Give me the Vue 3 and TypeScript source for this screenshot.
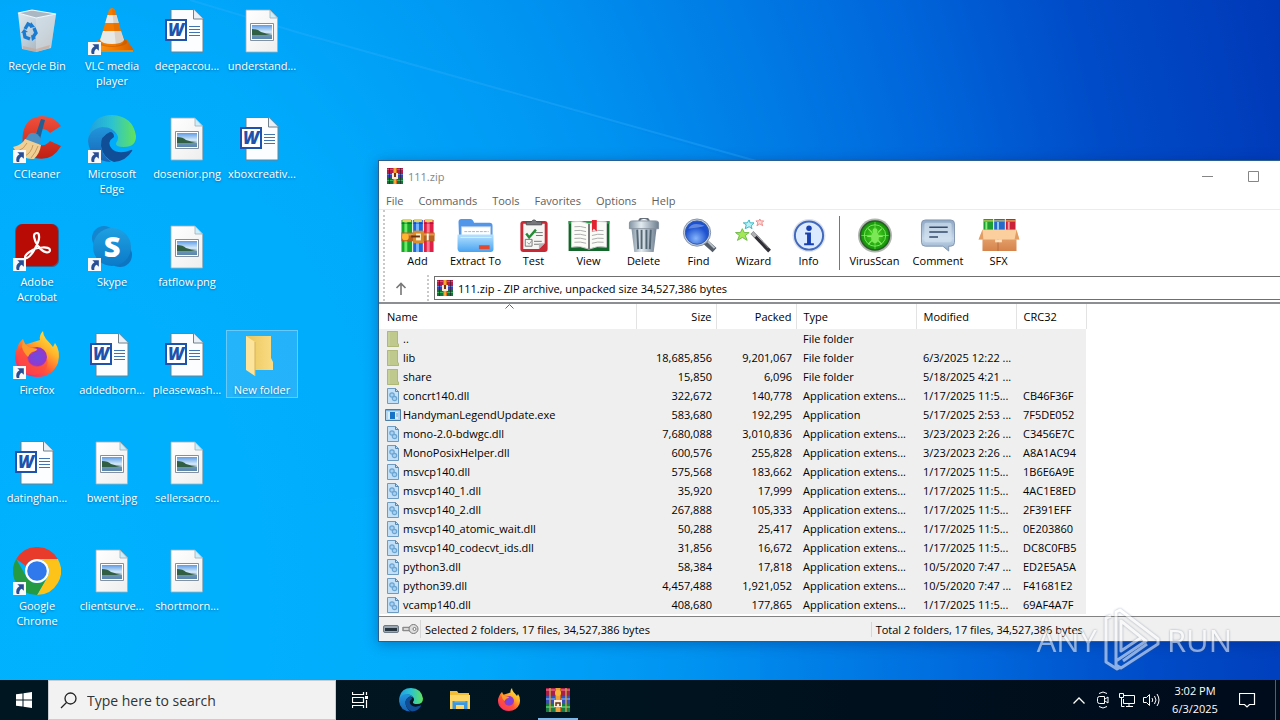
<script setup lang="ts">
interface Shortcut {
  lines: string[]
  icon: string
  link?: boolean
  selected?: boolean
}

const columns: (Shortcut | null)[][] = [
  [
    { lines: ['Recycle Bin'], icon: 'bin' },
    { lines: ['CCleaner'], icon: 'ccleaner', link: true },
    { lines: ['Adobe', 'Acrobat'], icon: 'acrobat', link: true },
    { lines: ['Firefox'], icon: 'firefox', link: true },
    { lines: ['datinghan...'], icon: 'word' },
    { lines: ['Google', 'Chrome'], icon: 'chrome', link: true },
  ],
  [
    { lines: ['VLC media', 'player'], icon: 'vlc', link: true },
    { lines: ['Microsoft', 'Edge'], icon: 'edge', link: true },
    { lines: ['Skype'], icon: 'skype', link: true },
    { lines: ['addedborn...'], icon: 'word' },
    { lines: ['bwent.jpg'], icon: 'picture' },
    { lines: ['clientsurve...'], icon: 'picture' },
  ],
  [
    { lines: ['deepaccou...'], icon: 'word' },
    { lines: ['dosenior.png'], icon: 'picture' },
    { lines: ['fatflow.png'], icon: 'picture' },
    { lines: ['pleasewash...'], icon: 'word' },
    { lines: ['sellersacro...'], icon: 'picture' },
    { lines: ['shortmorn...'], icon: 'picture' },
  ],
  [
    { lines: ['understand...'], icon: 'picture' },
    { lines: ['xboxcreativ...'], icon: 'word' },
    null,
    { lines: ['New folder'], icon: 'folder', selected: true },
  ],
]

const menus = ['File', 'Commands', 'Tools', 'Favorites', 'Options', 'Help']

const mainTools = [
  { label: 'Add', icon: 't-add', size: 'medium' },
  { label: 'Extract To', icon: 't-extract', size: 'wide' },
  { label: 'Test', icon: 't-test', size: 'medium' },
  { label: 'View', icon: 't-view', size: 'medium' },
  { label: 'Delete', icon: 't-delete', size: 'medium' },
  { label: 'Find', icon: 't-find', size: 'medium' },
  { label: 'Wizard', icon: 't-wizard', size: 'medium' },
  { label: 'Info', icon: 't-info', size: 'medium' },
]
const extraTools = [
  { label: 'VirusScan', icon: 't-virus', size: 'wide' },
  { label: 'Comment', icon: 't-comment', size: 'wider' },
  { label: 'SFX', icon: 't-sfx', size: 'medium' },
]

const headers = [
  { label: 'Name', cls: 'name' },
  { label: 'Size', cls: 'num' },
  { label: 'Packed', cls: 'num' },
  { label: 'Type', cls: '' },
  { label: 'Modified', cls: '' },
  { label: 'CRC32', cls: '' },
]

type Row = [string, string, string, string, string, string, string]
const ext = 'Application extens...'
const rows: Row[] = [
  ['f-folder', '..', '', '', 'File folder', '', ''],
  ['f-folder', 'lib', '18,685,856', '9,201,067', 'File folder', '6/3/2025 12:22 ...', ''],
  ['f-folder', 'share', '15,850', '6,096', 'File folder', '5/18/2025 4:21 ...', ''],
  ['f-dll', 'concrt140.dll', '322,672', '140,778', ext, '1/17/2025 11:5...', 'CB46F36F'],
  ['f-exe', 'HandymanLegendUpdate.exe', '583,680', '192,295', 'Application', '5/17/2025 2:53 ...', '7F5DE052'],
  ['f-dll', 'mono-2.0-bdwgc.dll', '7,680,088', '3,010,836', ext, '3/23/2023 2:26 ...', 'C3456E7C'],
  ['f-dll', 'MonoPosixHelper.dll', '600,576', '255,828', ext, '3/23/2023 2:26 ...', 'A8A1AC94'],
  ['f-dll', 'msvcp140.dll', '575,568', '183,662', ext, '1/17/2025 11:5...', '1B6E6A9E'],
  ['f-dll', 'msvcp140_1.dll', '35,920', '17,999', ext, '1/17/2025 11:5...', '4AC1E8ED'],
  ['f-dll', 'msvcp140_2.dll', '267,888', '105,333', ext, '1/17/2025 11:5...', '2F391EFF'],
  ['f-dll', 'msvcp140_atomic_wait.dll', '50,288', '25,417', ext, '1/17/2025 11:5...', '0E203860'],
  ['f-dll', 'msvcp140_codecvt_ids.dll', '31,856', '16,672', ext, '1/17/2025 11:5...', 'DC8C0FB5'],
  ['f-dll', 'python3.dll', '58,384', '17,818', ext, '10/5/2020 7:47 ...', 'ED2E5A5A'],
  ['f-dll', 'python39.dll', '4,457,488', '1,921,052', ext, '10/5/2020 7:47 ...', 'F41681E2'],
  ['f-dll', 'vcamp140.dll', '408,680', '177,865', ext, '1/17/2025 11:5...', '69AF4A7F'],
]

const pinned = [
  { label: 'Microsoft Edge', icon: 'edge', cls: '' },
  { label: 'File Explorer', icon: 'explorer', cls: '' },
  { label: 'Firefox', icon: 'firefox', cls: '' },
  { label: 'WinRAR', icon: 'rar-tall', cls: 'active' },
]
</script>

<template>
  <div class="screen">
    <svg class="sprite" aria-hidden="true">
      <defs>
        <linearGradient id="g-bin" x1="0" y1="0" x2="1" y2="1"><stop offset="0" stop-color="#dfe7ec" /><stop offset=".5" stop-color="#b9cbd8" /><stop offset="1" stop-color="#a79f9b" /></linearGradient>
        <linearGradient id="g-red" x1="0" y1="0" x2="0" y2="1"><stop offset="0" stop-color="#f0503c" /><stop offset="1" stop-color="#c01f12" /></linearGradient>
        <linearGradient id="g-orange" x1="0" x2="1"><stop offset="0" stop-color="#ff9a1e" /><stop offset=".5" stop-color="#f47a00" /><stop offset="1" stop-color="#d45f00" /></linearGradient>
        <linearGradient id="g-edge1" x1="0" y1=".4" x2="1" y2=".4"><stop offset="0" stop-color="#1f9fe0" /><stop offset=".5" stop-color="#2cc3d0" /><stop offset="1" stop-color="#62e35a" /></linearGradient>
        <linearGradient id="g-edge2" x1="0" y1="0" x2="0" y2="1"><stop offset="0" stop-color="#2196dc" /><stop offset="1" stop-color="#1763b5" /></linearGradient>
        <linearGradient id="g-skype" x1="0" y1="0" x2="0" y2="1"><stop offset="0" stop-color="#1fa0e2" /><stop offset="1" stop-color="#0b7ac8" /></linearGradient>
        <linearGradient id="g-fox" x1=".9" y1="0" x2=".2" y2="1"><stop offset="0" stop-color="#fff04a" /><stop offset=".35" stop-color="#ffb52a" /><stop offset=".65" stop-color="#ff5a36" /><stop offset="1" stop-color="#f0207a" /></linearGradient>
        <radialGradient id="g-fox2"><stop offset="0" stop-color="#6a4de0" /><stop offset="1" stop-color="#9a35c8" /></radialGradient>
        <linearGradient id="g-photo" x1="0" y1="0" x2="0" y2="1"><stop offset="0" stop-color="#5f9be6" /><stop offset=".5" stop-color="#d5e9f8" /><stop offset="1" stop-color="#6e9cc4" /></linearGradient>
        <linearGradient id="g-page" x1="0" y1="0" x2="1" y2="1"><stop offset="0" stop-color="#ffffff" /><stop offset="1" stop-color="#eeeeee" /></linearGradient>
        <linearGradient id="g-folder" x1="0" x2="1"><stop offset="0" stop-color="#e8c65e" /><stop offset="1" stop-color="#fbdc83" /></linearGradient>
        <linearGradient id="g-blue" x1="0" y1="0" x2="0" y2="1"><stop offset="0" stop-color="#b6e2ff" /><stop offset="1" stop-color="#49a3f2" /></linearGradient>
        <linearGradient id="g-metal" x1="0" x2="1"><stop offset="0" stop-color="#8495a3" /><stop offset=".4" stop-color="#e2ebf1" /><stop offset="1" stop-color="#6d7e8e" /></linearGradient>
        <radialGradient id="g-lens" cx=".45" cy=".75"><stop offset="0" stop-color="#86b5fa" /><stop offset="1" stop-color="#1d51cf" /></radialGradient>
        <radialGradient id="g-scan"><stop offset="0" stop-color="#4fdc22" /><stop offset="1" stop-color="#118f08" /></radialGradient>
        <linearGradient id="g-note" x1="0" y1="0" x2="0" y2="1"><stop offset="0" stop-color="#8fa8c4" /><stop offset=".6" stop-color="#c6d8ea" /><stop offset="1" stop-color="#8eabc9" /></linearGradient>
        <linearGradient id="g-box" x1="0" y1="0" x2="0" y2="1"><stop offset="0" stop-color="#efb27c" /><stop offset="1" stop-color="#d5834c" /></linearGradient>
      </defs>

      <symbol id="link" viewBox="0 0 12 12">
        <path d="M0 0h12v12H0z" fill="#f7f9fb" />
        <path d="M4 2h6v6L8 6.300Q5.500 7.500 5.800 11H3.500Q1.800 6.500 6 4z" fill="#284f96" />
      </symbol>

      <symbol id="bin" viewBox="0 0 48 48">
        <path d="M5 6 9 42l14 3 15-4 5-34-20 4z" fill="url(#g-bin)" />
        <path d="M23 11 23 45l15-4 5-34z" fill="#d9e1e7" opacity=".6" />
        <path d="M5 6 19 3l24 4-20 4z" fill="#a9b8c3" stroke="#f4f8fa" stroke-width="1.200" />
        <g fill="none" stroke="#1b7bd0" stroke-width="3.400"><path d="M12 22l3-5 4 2M21 21l2 5-3 4M17 32l-5-2-1-5" /></g>
        <path d="M18 15l4 5-5 1zM18 28l1 6 4-3zM8 26l3-4 4 3z" fill="#1b7bd0" />
        <path d="M10 39l13 3 14-4-1 3-13 4-13-3z" fill="#c9a38f" opacity=".6" />
      </symbol>

      <symbol id="vlc" viewBox="0 0 48 48">
        <path d="M12 32h24l3 1 6 9v3H7v-3l2-8z" fill="url(#g-orange)" />
        <path d="M7 43h38v2H7z" fill="#e88a10" />
        <ellipse cx="24" cy="35" rx="15" ry="5" fill="#b85600" opacity=".5" />
        <path d="M21 3q3-4 6 0l9 31q-1 5-12 5t-12-5z" fill="#f47a00" />
        <path d="M19.500 8h9l2.300 8H17.200zM15 24h18l3 9q-2 4-12 4t-12-4z" fill="#e7e9e8" />
        <path d="M24 2q2 0 3 2l9 31q-2 4-8 4z" fill="#9a4a10" opacity=".15" />
      </symbol>

      <symbol id="ccleaner" viewBox="0 0 48 48">
        <path d="M48 11Q41 1 29 1 13 2 10 18q-3 18 12 25 17 4 26-12l-11-5q-4 5-9 4-6-2-6-8 1-8 7-8 5 0 8 4z" fill="url(#g-red)" />
        <path d="M28 4l4 1-5 19-5-2z" fill="#245f93" />
        <path d="M16 19q7-4 12 5l-2 6-14-5z" fill="#4a90c4" />
        <path d="M12 24l16 6q-1 8-7 14-10 1-19-9l-2-3q9-2 12-8z" fill="#f0cf94" />
        <path d="M14 28q-3 6-9 8M20 30q-2 8-8 11M25 31q-2 6-7 12" stroke="#c8995c" fill="none" />
      </symbol>

      <symbol id="acrobat" viewBox="0 0 48 48">
        <rect x="2" y="1" width="44" height="43" rx="7" fill="#6a1a20" opacity=".5" />
        <rect x="3" y="1" width="42" height="42" rx="7" fill="#b90b05" />
        <path d="M24 10c-5 0-3 7 1 13 5 7 12 8 12 4 0-4-14-3-19 1-7 4-7 8-4 7 5-2 13-17 12-22q0-3-2-3z" fill="none" stroke="#fff" stroke-width="2.200" />
      </symbol>

      <symbol id="skype" viewBox="0 0 48 48">
        <circle cx="16" cy="15" r="12" fill="#1485cf" />
        <circle cx="32" cy="32" r="12" fill="#0c76c2" />
        <circle cx="24" cy="24" r="19" fill="url(#g-skype)" />
      </symbol>

      <symbol id="firefox" viewBox="0 0 48 48">
        <path d="M30 0q-4 4-3 9L11 14 10 8q-4 3-6 9Q0 25 4 35q7 11 20 11 15 0 21-14 3-12-3-20l-2 4Q36 11 33 8q-3-4-3-8z" fill="url(#g-fox)" />
        <circle cx="24" cy="26" r="10" fill="url(#g-fox2)" />
        <path d="M8 17q4-3 8-1 8 0 9 3-5 1-6 4-4 0-4 4 1 8 10 8 7-1 9-8 3 14-12 17Q6 44 5 28q0-7 3-11z" fill="#ff4b3e" opacity=".6" />
        <path d="M10 8q1 5 6 8l8 2q0 2-5 3-3 2-4 5-5-5-6-10z" fill="#ff9a2b" />
      </symbol>

      <symbol id="edge" viewBox="0 0 48 48">
        <path d="M1 18Q5 0 24 0q21 1 24 21 0 11-12 11-9 0-8-4 4-5 0-10-7-8-18-3-8 4-10 12z" fill="url(#g-edge1)" />
        <path d="M0 26Q1 14 14 12q12 0 15 9-2-4-7-4-8 3-9 11 0 12 10 19Q2 46 0 26z" fill="url(#g-edge2)" />
        <path d="M22 17q-10 4-9 14 2 12 13 16 12-1 18-11 1-2-1-1-12 5-19-1-6-7 2-12 0-5-4-5z" fill="#104f98" />
      </symbol>

      <symbol id="chrome" viewBox="0 0 48 48">
        <path d="M3.200 12A24 24 0 0 1 44.800 12H24A12 12 0 0 0 13 19z" fill="#e93b2b" />
        <path d="M44.800 12A24 24 0 0 1 24 48L34.400 30A12 12 0 0 0 24 12z" fill="#fdc318" />
        <path d="M3.200 12A24 24 0 0 0 24 48L34.400 30A12 12 0 0 1 13.600 30z" fill="#259a43" />
        <circle cx="24" cy="24" r="12" fill="#fff" /><circle cx="24" cy="24" r="9.800" fill="#3079ed" />
      </symbol>

      <symbol id="word" viewBox="0 0 48 48">
        <path d="M8 2.500h23l9 9V45H8z" fill="#fcfdfe" stroke="#71808c" />
        <path d="M30.500 2.500V12H40" fill="#e9eff5" stroke="#71808c" />
        <path d="M26 19.500h11M26 22.500h11M26 25.500h11M26 28.500h11" stroke="#4474ae" />
        <rect x="3" y="13" width="20" height="20" fill="#fff" stroke="#1d53ad" stroke-width="2" />
      </symbol>

      <symbol id="picture" viewBox="0 0 48 48">
        <path d="M8 3h24l7.500 8V45H8z" fill="url(#g-page)" stroke="#a3afb8" stroke-width=".8" />
        <path d="M32 3v8h7.500z" fill="#cbeefa" stroke="#9fb0b8" stroke-width=".8" />
        <path d="M12.500 16.500h23v17h-23z" fill="#fff" stroke="#83919f" />
        <path d="M14 18h20v14H14z" fill="url(#g-photo)" />
        <path d="M14 22q6 0 9 3 5 2 11 2l-6 1H14z" fill="#315f43" />
        <path d="M14 28h20v4H14z" fill="#537ea2" opacity=".7" />
      </symbol>

      <symbol id="folder" viewBox="0 0 48 48">
        <path d="M8 5h25v22l2 4v8H16L8 36z" fill="url(#g-folder)" />
        <path d="M8 5l9 6v34l-9-6z" fill="#fce49c" />
        <path d="M17 11v34" stroke="#d9b256" />
      </symbol>

      <symbol id="explorer" viewBox="0 0 48 48">
        <path d="M4 6h14l3 4h21v32H4z" fill="#f4bd36" /><path d="M4 14h40v28H4z" fill="#ffd767" />
        <path d="M9 26h30v16H9z" fill="#3d97dd" /><path d="M16 34h16v8H16z" fill="#ffd767" /><path d="M13 26h22v3H13z" fill="#67b4ed" />
      </symbol>

      <symbol id="rar" viewBox="0 0 16 16">
        <path d="M0 0h16v5H0z" fill="#b41d48" /><path d="M0 1h16v1H0z" fill="#e04a6a" />
        <path d="M0 5h16v5H0z" fill="#4b3bb3" /><path d="M0 6h16v1H0z" fill="#4f7fe0" />
        <path d="M0 10h16v6H0z" fill="#186f38" /><path d="M0 12h16v1H0z" fill="#37b25c" />
        <path d="M2 0h1v16H2zM13 0h1v16h-1z" fill="#2a1530" opacity=".6" />
        <path d="M6 0h4v16H6z" fill="#d96b1b" /><path d="M7 0h2v16H7z" fill="#f1aa38" />
        <path d="M5 5h6v6H5z" fill="#f6ead8" /><path d="M7 5h2v4H7z" fill="#76310d" />
      </symbol>

      <symbol id="rar-tall" viewBox="0 0 24 24">
        <path d="M0 0h24v8H0z" fill="#a82048" /><path d="M0 1h24v2H0z" fill="#d8506c" />
        <path d="M0 8h24v8H0z" fill="#3c4fb0" /><path d="M0 10h24v2H0z" fill="#5d8be0" />
        <path d="M0 16h24v8H0z" fill="#1b7a40" /><path d="M0 18h24v2H0z" fill="#45b868" />
        <path d="M3 0h2v24H3zM19 0h2v24h-2z" fill="#c8a050" opacity=".7" />
        <path d="M9 0h6v24H9z" fill="#c8641c" /><path d="M10 0h4v24h-4z" fill="#eda23a" />
        <circle cx="12" cy="5" r="3" fill="#f8b838" /><path d="M8 12h8v7H8z" fill="#f5eadb" />
        <path d="M10 18v-3h4v3" fill="none" stroke="#6a3010" stroke-width="1.500" />
      </symbol>

      <symbol id="t-add" viewBox="0 0 36 36">
        <path d="M1 2h11v33H1z" fill="#18a62b" /><path d="M13 2h10v33H13z" fill="#2467d8" /><path d="M24 2h10v33H24z" fill="#df1f45" />
        <path d="M4 3h3v32H4z" fill="#6cea6a" /><path d="M16 3h3v32h-3z" fill="#76b7ff" /><path d="M27 3h3v32h-3z" fill="#ff7893" />
        <path d="M1 5h11v1H1zM13 5h10v1H13zM24 5h10v1H24z" fill="#2a2140" opacity=".5" />
        <path d="M2 1h9v3H2zM14 1h8v3h-8zM25 1h8v3h-8z" fill="#e6d35a" />
        <path d="M1 15h34v9H1z" fill="#b9611e" /><path d="M1 16h34v2H1z" fill="#e59548" />
        <path d="M13 13h11v13H13z" fill="#d98c2a" /><path d="M16 16h5v7h-5z" fill="#fff0c8" /><path d="M11 18h9v2h-9z" fill="#6a3210" />
        <circle cx="5" cy="19.500" r="3.500" fill="#ffb52d" /><path d="M27 16h2v7h-2z" fill="#fff" />
      </symbol>

      <symbol id="t-extract" viewBox="0 0 40 36">
        <path d="M2 4q0-3 3-3h9q3 0 4 4h16q3 0 3 3v24H3z" fill="#5296ea" />
        <path d="M5 9h30v12H5z" fill="#fff" stroke="#b6cde6" /><path d="M8 14h25" stroke="#8fb8e2" stroke-dasharray="3 1" />
        <path d="M1 17h37v15q0 3-3 3H5q-4 0-4-4z" fill="url(#g-blue)" />
        <path d="M23 28h11v4H23z" fill="#e14a30" /><path d="M4 20h32" stroke="#d4efff" />
      </symbol>

      <symbol id="t-test" viewBox="0 0 36 36">
        <rect x="4" y="3" width="28" height="32" rx="3" fill="#c82a35" />
        <path d="M7 6h22v20l-6 6H7z" fill="#f6f6f5" /><path d="M29 26l-6 6v-6z" fill="#b5b5b8" />
        <path d="M10 7V4h5q3-4 6 0h5v3z" fill="#77777c" stroke="#4f4f55" />
        <path d="M10 16l3 4 7-8" fill="none" stroke="#248b35" stroke-width="2.500" />
        <path d="M9 22h7v7H9zM19 15h8M20 18h7M18 24h8M18 27h5" fill="none" stroke="#777" />
        <path d="M11 25l2 2 3-4" fill="none" stroke="#999" />
      </symbol>

      <symbol id="t-view" viewBox="0 0 44 36">
        <path d="M1 3h42v31H1z" fill="#14672b" /><path d="M1 3h42v3H1z" fill="#289d48" />
        <path d="M4 4q9-2 18 2 9-4 18-2v26q-10-2-18 2-9-4-18-2z" fill="#fbfbf8" stroke="#ccc" />
        <path d="M22 6v26" stroke="#777" stroke-width="2" />
        <path d="M7 9q6-1 12 1M7 13q6-1 12 1M7 17q6-1 12 1M7 21q6-1 12 1M7 25q6-1 12 1M25 14q6-2 12-1M25 18q6-2 12-1M25 22q6-2 12-1M25 26q6-2 12-1" fill="none" stroke="#aaa" />
        <path d="M25 2h5v12l-3-3-2 3z" fill="#e42331" />
      </symbol>

      <symbol id="t-delete" viewBox="0 0 36 36">
        <path d="M13 4q0-4 5-4t5 4" fill="none" stroke="#66717c" stroke-width="2" />
        <path d="M5 10h26l-3 25H8z" fill="url(#g-metal)" />
        <path d="M11 12l1 20M15.500 12v20M20.500 12v20M25 12l-1 20" stroke="#536674" stroke-width="2" />
        <path d="M3 5q0-2 3-2h24q3 0 3 2v6H3z" fill="url(#g-metal)" stroke="#84919d" />
      </symbol>

      <symbol id="t-find" viewBox="0 0 36 36">
        <path d="M24 24l10 9" stroke="#535c67" stroke-width="6" /><path d="M27 24l7 7" stroke="#b8c1ca" stroke-width="2" />
        <circle cx="16" cy="15" r="14" fill="#c4cedc" stroke="#8393a9" /><circle cx="16" cy="15" r="12" fill="url(#g-lens)" stroke="#3159a8" />
        <path d="M7 11q4-8 17-3-6 2-17 3" fill="#8daee9" opacity=".6" />
      </symbol>

      <symbol id="t-wizard" viewBox="0 0 36 36">
        <path d="M16 15l18 19" stroke="#302f36" stroke-width="4" /><path d="M16 15l4 4" stroke="#aeb0b2" stroke-width="4" /><path d="M18 15l15 16" stroke="#a5a5ab" />
        <path d="M6 11l2 4 5 0-4 3 2 5-5-3-5 3 2-5-4-3 5 0z" fill="#a4e858" stroke="#6eba45" />
        <path d="M13 2l1 3 4 0-3 3 1 3-3-2-4 2 1-4-3-2 4 0z" fill="#bdf2f5" stroke="#35b8c7" />
        <path d="M24 1l1 2h3l-2 2 1 3-3-2-3 2 1-3-2-2h3z" fill="#ffdcd8" stroke="#ed8a88" />
      </symbol>

      <symbol id="t-info" viewBox="0 0 36 36">
        <circle cx="18" cy="18" r="17" fill="#dce2ea" /><circle cx="18" cy="18" r="14.500" fill="#dceaff" stroke="#4168bd" stroke-width="2" />
        <circle cx="18" cy="10.500" r="2.800" fill="#173faf" /><path d="M14 15h6v11h3v2H13v-2h3v-9h-2z" fill="#173faf" />
      </symbol>

      <symbol id="t-virus" viewBox="0 0 36 36">
        <circle cx="18" cy="18" r="17.500" fill="#b0b5b0" /><circle cx="18" cy="18" r="15" fill="url(#g-scan)" stroke="#2c5a2a" stroke-width="1.500" />
        <circle cx="18" cy="18" r="11" fill="none" stroke="#8ef66e" opacity=".8" /><path d="M18 4v28M4 18h28" stroke="#8ef66e" opacity=".6" />
        <path d="M11 11l4 4M25 11l-4 4M10 19h16M11 27l4-4M25 27l-4-4" stroke="#8aec6a" stroke-width="1.200" />
        <ellipse cx="18" cy="20" rx="4" ry="6" fill="#7ce858" /><circle cx="18" cy="13" r="2.500" fill="#7ce858" />
      </symbol>

      <symbol id="t-comment" viewBox="0 0 36 36">
        <path d="M5 2h26q4 0 4 4v19q0 4-4 4h-2v5l-6-5H5q-4 0-4-4V6q0-4 4-4z" fill="url(#g-note)" stroke="#8296ae" />
        <rect x="4" y="5" width="28" height="20" rx="2" fill="#d6e4f2" opacity=".6" />
        <path d="M9 9.500h19M9 14.500h19M9 19.500h9" stroke="#344b6b" stroke-width="1.500" />
      </symbol>

      <symbol id="t-sfx" viewBox="0 0 44 36">
        <path d="M6 1h10v15H6z" fill="#1e9f32" /><path d="M17 1h11v15H17z" fill="#2768cb" /><path d="M29 1h10v15H29z" fill="#ca2138" />
        <path d="M6 3h10M17 3h11M29 3h10" stroke="#f0db61" stroke-width="1" /><path d="M9 4v8" stroke="#88ed7d" stroke-width="2" /><path d="M21 4v8" stroke="#91c9ff" stroke-width="2" /><path d="M32 4v8" stroke="#ff98a3" stroke-width="2" />
        <path d="M5 12h35v22H5z" fill="url(#g-box)" /><path d="M5 12h35l3 10H1z" fill="#fbd09e" /><path d="M5 12L1 22h5zM40 12l3 10h-5z" fill="#e39c61" />
        <path d="M21 22v12" stroke="#b86b3f" /><path d="M18 22h7v3h-7z" fill="#fae0bd" />
      </symbol>

      <symbol id="f-folder" viewBox="0 0 16 16"><path d="M2 0h11v12l1 1v3H2z" fill="#bfc98d" /><path d="M2 0h3v16H2z" fill="#c6d09a" /><path d="M2.500.5h10v12l1 1v2h-11z" fill="none" stroke="#afb877" /></symbol>
      <symbol id="f-dll" viewBox="0 0 16 16">
        <path d="M2.500.5h8l3 3v12h-11z" fill="#c4e0f6" stroke="#6d9bc1" /><path d="M10.500.5v3h3" fill="none" stroke="#5587b0" />
        <circle cx="7" cy="7" r="2.200" fill="#a9d0ee" stroke="#6ba5d3" stroke-width="1.200" /><circle cx="9.500" cy="10.500" r="2.200" fill="#a9d0ee" stroke="#6ba5d3" stroke-width="1.200" />
      </symbol>
      <symbol id="f-exe" viewBox="0 0 16 16"><path d="M.5 2.500h15v11H.5z" fill="#b5d6ef" stroke="#4d7da5" /><path d="M1 3h14v1H1z" fill="#7cb1d9" /><path d="M3 5h10v7H3z" fill="#d8ecfa" /><path d="M5 5h5v7H5z" fill="#1873c6" /><path d="M11 7h2M11 9h2" stroke="#7fa7ca" /></symbol>
    </svg>

    <main class="desktop">
      <svg class="wallpaper" viewBox="0 0 1280 680" preserveAspectRatio="none" aria-hidden="true">
        <path d="M190 0 760 166 760 680 0 680 0 0z" fill="#00aaff" opacity=".1" />
        <path d="M190 0 300 33 760 162" fill="none" stroke="#35b4ff" stroke-width="2" opacity=".3" />
        <path d="M0 545 380 495V680H0z" fill="#00b8ff" opacity=".12" />
      </svg>

      <div class="shortcuts">
        <div v-for="(col, c) in columns" :key="c" class="shortcut-col">
          <div v-for="(item, r) in col" :key="r" class="slot">
            <button v-if="item" type="button" class="shortcut" :class="{ selected: item.selected }">
              <span class="shortcut-icon">
                <svg class="i48" viewBox="0 0 48 48">
                  <use :href="'#' + item.icon" width="48" height="48" />
                  <text v-if="item.icon === 'word'" class="word-mark" x="13" y="29" text-anchor="middle">W</text>
                  <text v-if="item.icon === 'skype'" class="skype-mark" x="24" y="34" text-anchor="middle">S</text>
                </svg>
                <svg v-if="item.link" class="badge"><use href="#link" /></svg>
              </span>
              <span v-for="line in item.lines" :key="line" class="shortcut-label">{{ line }}</span>
            </button>
          </div>
        </div>
      </div>

      <section class="window" aria-label="111.zip">
        <header class="titlebar">
          <svg class="i16"><use href="#rar" /></svg>
          <span class="title">111.zip</span>
          <button type="button" class="caption" aria-label="Minimize"><svg width="11" height="11"><path d="M0 5.500h11" stroke="#858585" /></svg></button>
          <button type="button" class="caption" aria-label="Maximize"><svg width="11" height="11"><path d="M.5.5h10v10H.5z" fill="none" stroke="#858585" /></svg></button>
        </header>
        <nav class="menubar">
          <button v-for="m in menus" :key="m" type="button">{{ m }}</button>
        </nav>
        <div class="bars">
          <div class="toolbar">
            <button v-for="t in mainTools" :key="t.label" type="button" class="tool" :class="t.size">
              <svg class="tool-icon"><use :href="'#' + t.icon" /></svg>
              <span>{{ t.label }}</span>
            </button>
            <span class="tool-sep"></span>
            <button v-for="t in extraTools" :key="t.label" type="button" class="tool" :class="t.size">
              <svg class="tool-icon"><use :href="'#' + t.icon" /></svg>
              <span>{{ t.label }}</span>
            </button>
          </div>
          <div class="address-row">
            <button type="button" class="up" aria-label="Up">
              <svg width="12" height="13" viewBox="0 0 12 13"><path d="M6 13V2M1.500 6 6 1.500 10.500 6" fill="none" stroke="#777" stroke-width="1.600" /></svg>
            </button>
            <label class="address">
              <svg class="i16"><use href="#rar" /></svg>
              <input type="text" value="111.zip - ZIP archive, unpacked size 34,527,386 bytes" aria-label="Address" />
            </label>
          </div>
        </div>
        <div class="list">
          <table>
            <colgroup><col class="c-name" /><col class="c-num" /><col class="c-num" /><col class="c-type" /><col class="c-date" /><col class="c-crc" /></colgroup>
            <thead>
              <tr>
                <th v-for="h in headers" :key="h.label" scope="col" :class="h.cls">
                  {{ h.label }}
                  <svg v-if="h.cls === 'name'" class="sort" width="9" height="5"><path d="M.5 4.500l4-4 4 4" fill="none" stroke="#666" /></svg>
                </th>
              </tr>
            </thead>
            <tbody>
              <tr v-for="row in rows" :key="row[1]">
                <td class="file"><span class="file-cell"><svg class="i16"><use :href="'#' + row[0]" /></svg>{{ row[1] }}</span></td>
                <td class="num">{{ row[2] }}</td>
                <td class="num">{{ row[3] }}</td>
                <td>{{ row[4] }}</td>
                <td>{{ row[5] }}</td>
                <td>{{ row[6] }}</td>
              </tr>
            </tbody>
          </table>
        </div>
        <footer class="status">
          <div class="status-icons">
            <svg width="16" height="10"><rect x=".5" y="1.500" width="15" height="7" rx="1.500" fill="#9aa7b2" stroke="#6f7c87" /><path d="M2 4h12v3H2z" fill="#26343f" /></svg>
            <svg width="17" height="12"><path d="M1 4.500h9M1 7.500h9M1 4v4" fill="none" stroke="#8b8b8b" stroke-width="1.500" /><circle cx="11.500" cy="6" r="4.500" fill="#ddd" stroke="#777" /><circle cx="12.500" cy="6" r="1.500" fill="#fff" stroke="#777" /></svg>
          </div>
          <span class="status-left">Selected 2 folders, 17 files, 34,527,386 bytes</span>
          <span class="status-right">Total 2 folders, 17 files, 34,527,386 bytes</span>
        </footer>
      </section>

      <div class="watermark">
        <span>ANY</span>
        <svg width="58" height="64" viewBox="0 0 58 64">
          <path d="M8 8 3 10v44l11 7 4-2M13 53V4l4-2 38 29v5L18 60l-5-3v-4l30-20L18 13v30l21-14" fill="none" stroke="#fff" stroke-width="3" stroke-linejoin="round" />
          <path d="M20 53l24-17" fill="none" stroke="#fff" stroke-width="3" />
        </svg>
        <span>RUN</span>
      </div>
    </main>

    <footer class="taskbar">
      <button type="button" class="task" aria-label="Start">
        <svg width="16" height="16"><path d="M0 2.300 6.500 1.400V7.500H0zM7.500 1.200 16 0v7.500H7.500zM0 8.500h6.500v6.100L0 13.700zM7.500 8.500H16V16l-8.500-1.200z" fill="#fff" /></svg>
      </button>
      <label class="search">
        <svg width="17" height="17"><circle cx="10.500" cy="6.500" r="5.500" fill="none" stroke="#222" stroke-width="1.300" /><path d="M6.500 10.500 1 16" stroke="#222" stroke-width="1.300" /></svg>
        <input type="text" placeholder="Type here to search" aria-label="Search" />
      </label>
      <button type="button" class="task" aria-label="Task View">
        <svg width="17" height="16"><path d="M.5 0v2.500h11V0M.5 16v-2.500h11V16M.5 5.500h11v5H.5zM14.500 0v3M14.500 8v8" fill="none" stroke="#fff" stroke-width="1.200" /><path d="M13 4h3v3h-3z" fill="#fff" /></svg>
      </button>
      <div class="pinned">
        <button v-for="p in pinned" :key="p.label" type="button" class="task" :class="p.cls" :aria-label="p.label">
          <svg class="i24"><use :href="'#' + p.icon" /></svg>
        </button>
      </div>
      <div class="tray">
        <button type="button" aria-label="Hidden icons"><svg width="12" height="7"><path d="M.5 6.500 6 1l5.500 5.500" fill="none" stroke="#fff" stroke-width="1.300" /></svg></button>
        <button type="button" aria-label="Meet Now"><svg width="12" height="18"><path d="M2.500 5.500h5v7h-5q-2 0-2-2v-3q0-2 2-2zM8 8l3-2v6l-3-2M2 2.500q4-3 8 0M2 15.500q4 3 8 0" fill="none" stroke="#fff" /></svg></button>
        <button type="button" aria-label="Network"><svg width="16" height="14"><path d="M5 2.500h10.500v8h-11V6M.5.500h4v4h-4zM2.500 5v8.500h3M10 11v2.500M7 13.500h7" fill="none" stroke="#fff" /></svg></button>
        <button type="button" aria-label="Volume"><svg width="17" height="14"><path d="M.5 4.500h3l3-3v11l-3-3h-3zM9 5q1.500 2 0 4M11.500 3q3 4 0 8M14 1q4 6 0 12" fill="none" stroke="#fff" /></svg></button>
        <button type="button" class="clock"><time>3:02 PM</time><time>6/3/2025</time></button>
        <button type="button" class="notif" aria-label="Notifications"><svg width="17" height="17"><path d="M.5 1.500h15v11h-5L8 15l-2.500-2.500h-5z" fill="none" stroke="#fff" stroke-width="1.200" /></svg></button>
        <span class="peek"></span>
      </div>
    </footer>
  </div>
</template>

<style>
body { margin: 0; }
</style>

<style scoped>
.screen {
  display: flex;
  flex-direction: column;
  height: 100vh;
  overflow: hidden;
  font-family: "Open Sans", "Noto Sans", sans-serif;
  font-size: 11px;
  line-height: 15px;
  color: #000;
}
.sprite { position: absolute; width: 0; height: 0; }
svg { display: block; flex: none; }
button { margin: 0; padding: 0; border: 0; background: none; color: inherit; font: inherit; }
input { min-width: 0; padding: 0; border: 0; outline: 0; background: none; color: inherit; font: inherit; }
.i16 { width: 16px; height: 16px; }
.i24 { width: 24px; height: 24px; }
.i48 { width: 48px; height: 48px; }

.desktop {
  position: relative;
  flex: 1;
  min-height: 0;
  overflow: hidden;
  background: radial-gradient(ellipse 1220px 1800px at 4% 90%, #00b5ff 0%, #00acfc 32%, #0092f0 52%, #0068dc 76%, #004cc8 90%, #0039b8 106%);
}
.wallpaper { position: absolute; inset: 0; width: 100%; height: 100%; }

.shortcuts { position: relative; display: flex; width: max-content; }
.shortcut-col { width: 75px; }
.slot { height: 108px; padding: 6px 2px 0 1px; box-sizing: border-box; }
.shortcut {
  display: flex;
  flex-direction: column;
  align-items: center;
  width: 100%;
  border: 1px solid transparent;
  color: #fff;
  text-shadow: 0 1px 2px rgba(0, 50, 100, 0.5);
}
.shortcut.selected { background: rgba(120, 195, 245, 0.3); border-color: rgba(150, 215, 255, 0.6); }
.shortcut-icon { position: relative; margin-bottom: 3px; text-shadow: none; }
.word-mark { fill: #1d53ad; font-size: 17px; font-style: italic; font-weight: 800; }
.skype-mark { fill: #fff; font-size: 29px; font-weight: 800; }
.badge { position: absolute; left: 0; bottom: 0; width: 13px; height: 13px; }
.shortcut-label { white-space: nowrap; }

.window {
  position: absolute;
  top: 160px;
  left: 378px;
  right: 0;
  box-sizing: border-box;
  border: 1px solid #2c5f8e;
  border-right: 0;
  background: #fff;
  box-shadow: 0 2px 12px rgba(0, 30, 90, 0.35);
}
.titlebar { display: flex; align-items: center; height: 30px; padding: 0 4px 0 8px; box-sizing: border-box; }
.title { flex: 1; margin-left: 5px; color: #858585; }
.caption { display: flex; align-items: center; justify-content: center; width: 46px; height: 28px; }
.menubar { display: flex; gap: 15px; height: 18px; padding: 0 7px; border-bottom: 1px solid #ececec; align-items: center; }
.menubar button { color: #606060; }

.bars { margin-left: 4px; border-left: 2px dotted #c9c9c9; }
.toolbar { display: flex; align-items: center; height: 65px; padding-left: 5px; box-sizing: border-box; }
.tool { display: flex; flex-direction: column; align-items: center; }
.tool-icon { width: 44px; height: 35px; }
.medium { width: 55px; }
.wide { width: 61px; }
.wider { width: 66px; }
.tool-sep { width: 1px; height: 54px; margin: 0 4px 0 3px; background: #777; }
.address-row { display: flex; height: 26px; }
.up { display: flex; align-items: center; justify-content: center; width: 44px; padding-right: 11px; border-right: 2px dotted #c9c9c9; box-sizing: border-box; }
.address { display: flex; flex: 1; align-items: center; gap: 5px; height: 24px; margin: 1px 0 0 5px; padding-left: 2px; box-sizing: border-box; border: 1px solid #6f6f6f; border-right: 0; }
.address input { flex: 1; }

.list { border-top: 2px solid #8b8f94; border-bottom: 1px solid #828282; margin-top: 1px; padding-bottom: 2px; }
table { width: 707px; border-collapse: collapse; table-layout: fixed; }
.c-name { width: 257px; }
.c-num { width: 80px; }
.c-type { width: 120px; }
.c-date { width: 100px; }
.c-crc { width: 70px; }
th, td { height: 19px; padding: 0 4px 0 7px; box-sizing: border-box; text-align: left; font-weight: 400; white-space: nowrap; }
th { position: relative; height: 25px; border-right: 1px solid #e3e3e3; }
th.name { padding-left: 8px; }
.sort { position: absolute; top: 0; left: 126px; }
td { background: #efefef; }
.num { text-align: right; }
.file { padding: 0; }
.file-cell { display: flex; align-items: center; gap: 2px; padding-left: 6px; }

.status { display: flex; align-items: center; height: 24px; padding-top: 0; background: #f0f0f0; }
.status-icons { display: flex; align-items: center; gap: 3px; width: 42px; height: 18px; padding-left: 4px; box-sizing: border-box; border-right: 1px solid #d6d6d6; }
.status-left { flex: 453; padding-left: 4px; }
.status-right { flex: 411; padding-left: 4px; border-left: 1px solid #d6d6d6; }

.watermark {
  position: absolute;
  right: 48px;
  bottom: 8px;
  display: flex;
  align-items: center;
  gap: 6px;
  color: #fff;
  opacity: 0.55;
  font-size: 31px;
  line-height: 64px;
  filter: drop-shadow(0 0 1px rgba(60, 80, 110, 0.8));
}

.taskbar { display: flex; flex: none; height: 40px; background: linear-gradient(90deg, #001722, #00141f 50%, #000b1b); color: #fff; }
.task { display: flex; align-items: center; justify-content: center; width: 48px; height: 40px; }
.search { display: flex; align-items: center; gap: 10px; width: 288px; padding: 0 11px; box-sizing: border-box; border: 1px solid #c9cdd0; background: #f2f2f2; color: #333; font-size: 14px; }
.search input { flex: 1; height: 30px; }
.search input::placeholder { color: #333; opacity: 1; }
.pinned { display: flex; gap: 1px; margin-left: 3px; }
.active { position: relative; }
.active::after { content: ""; position: absolute; left: 4px; right: 4px; bottom: 0; height: 2px; background: #76b9ed; }
.tray { display: flex; margin-left: auto; }
.tray button { display: flex; align-items: center; justify-content: center; width: 24px; }
.tray .clock { flex-direction: column; width: 64px; line-height: 18px; }
.tray .notif { width: 40px; }
.peek { width: 4px; margin-left: 8px; border-left: 1px solid #56606a; }
</style>
